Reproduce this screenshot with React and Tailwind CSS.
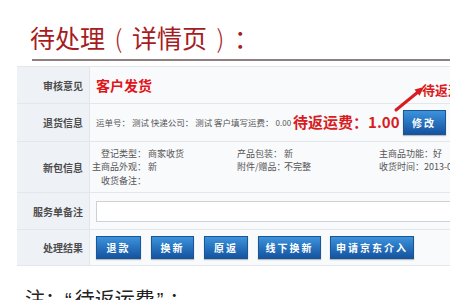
import React from 'react';

const btn =
  'h-[23px] flex items-center justify-center text-white text-[10px] font-bold tracking-[2px] bg-linear-to-b from-[#3c93dc] to-[#1553a0] border border-[#1a5597] shadow-[0_1px_1px_rgba(0,0,0,0.25)]';

function Row({ label, h, children }) {
  return (
    <div className={`flex border-b border-[#e3e6ea] ${h}`}>
      <div className="w-[72px] shrink-0 bg-[#eef1f5] flex items-center justify-end pr-[6px] text-[10px] font-bold text-[#4d4d4d]">
        {label}
      </div>
      <div className="flex-1 bg-[#f9fafc] border-l border-[#e3e6ea] flex items-center">
        {children}
      </div>
    </div>
  );
}

export default function App() {
  const col1 = [
    ['登记类型：', '商家收货'],
    ['主商品外观：', '新'],
    ['收货备注：', ''],
  ];
  const col2 = [
    ['产品包装：', '新'],
    ['附件/赠品：', '不完整'],
  ];
  const col3 = [
    ['主商品功能：', '好'],
    ['收货时间：', '2013-05-20'],
  ];

  return (
    <div className="relative w-[450px] h-[300px] overflow-hidden bg-white font-['Noto_Sans_CJK_SC',sans-serif]">
      {/* 标题 */}
      <div className="flex pl-[30px] pt-[25px] text-[25px] leading-[25px] text-[#a61c22] whitespace-nowrap">
        <span>待处理</span>
        <span className="w-[27px] text-center font-light">(</span>
        <span>详情页</span>
        <span className="w-[27px] text-center font-light">)</span>
        <span>：</span>
      </div>
      <div className="ml-[32px] mt-[9px] h-[2px] bg-[#8f8182]" />

      {/* 表格 */}
      <div className="ml-[17px] mt-[5px] w-[440px] border-t border-[#e3e6ea]">
        <Row label="审核意见" h="h-[37px]">
          <span className="pl-[6px] text-[14px] font-bold text-[#e0141a]">客户发货</span>
        </Row>

        <Row label="退货信息" h="h-[38px]">
          <div className="pl-[6px] flex items-center whitespace-nowrap">
            <span className="text-[8.5px] text-[#555]">
              运单号： 测试 快递公司： 测试 客户填写运费： <span className="text-[8px]">0.00</span>
            </span>
            <span className="ml-[2px] text-[15px] font-bold text-[#d81c22]">待返运费：1.00</span>
            <div className={`${btn} ml-[3px] w-[43px] h-[25px]`}>修改</div>
          </div>
        </Row>

        <Row label="新包信息" h="h-[51px]">
          <div className="pl-[2px] flex text-[9px] leading-[13.5px] text-[#555] whitespace-nowrap">
            <div className="w-[145px]">
              {col1.map(([k, v]) => (
                <div key={k} className="flex">
                  <span className="w-[54px] text-right">{k}</span>
                  <span className="pl-[2px]">{v}</span>
                </div>
              ))}
            </div>
            <div className="w-[142px]">
              {col2.map(([k, v]) => (
                <div key={k} className="flex">
                  <span className="w-[45px] text-right">{k}</span>
                  <span className="pl-[2px]">{v}</span>
                </div>
              ))}
            </div>
            <div>
              {col3.map(([k, v]) => (
                <div key={k}>
                  {k}
                  {v}
                </div>
              ))}
            </div>
          </div>
        </Row>

        <Row label="服务单备注" h="h-[37px]">
          <div className="pl-[6px] w-full">
            <div className="h-[21px] w-full bg-white border border-[#cdd1d6]" />
          </div>
        </Row>

        <Row label="处理结果" h="h-[36px]">
          <div className="pl-[6px] flex gap-[10px]">
            <div className={`${btn} w-[45px]`}>退款</div>
            <div className={`${btn} w-[43px]`}>换新</div>
            <div className={`${btn} w-[44px]`}>原返</div>
            <div className={`${btn} w-[63px] mr-[-1px]`}>线下换新</div>
            <div className={`${btn} w-[84px]`}>申请京东介入</div>
          </div>
        </Row>
      </div>

      {/* 注释 */}
      <div className="mt-[22px] pl-[25px] text-[20px] leading-[22px] text-[#222] whitespace-nowrap">
        注：<span className="font-['Liberation_Sans',sans-serif] mr-[3px]">“</span>待返运费<span className="font-['Liberation_Sans',sans-serif] ml-[2px] mr-[6px]">”</span>：
      </div>

      {/* 标注 */}
      <div className="absolute left-[421px] top-[81px] bg-white pl-[1px] text-[13px] leading-[17px] font-bold text-[#d81c22] whitespace-nowrap">
        待返运费
      </div>
      <svg className="absolute left-[390px] top-[80px]" width="40" height="35" viewBox="0 0 40 35">
        <line x1="6" y1="30" x2="28" y2="12" stroke="#d81c22" strokeWidth="3" strokeLinecap="round" />
        <polygon points="34,7 29.5,15.8 24.5,9.6" fill="#d81c22" />
      </svg>
    </div>
  );
}
